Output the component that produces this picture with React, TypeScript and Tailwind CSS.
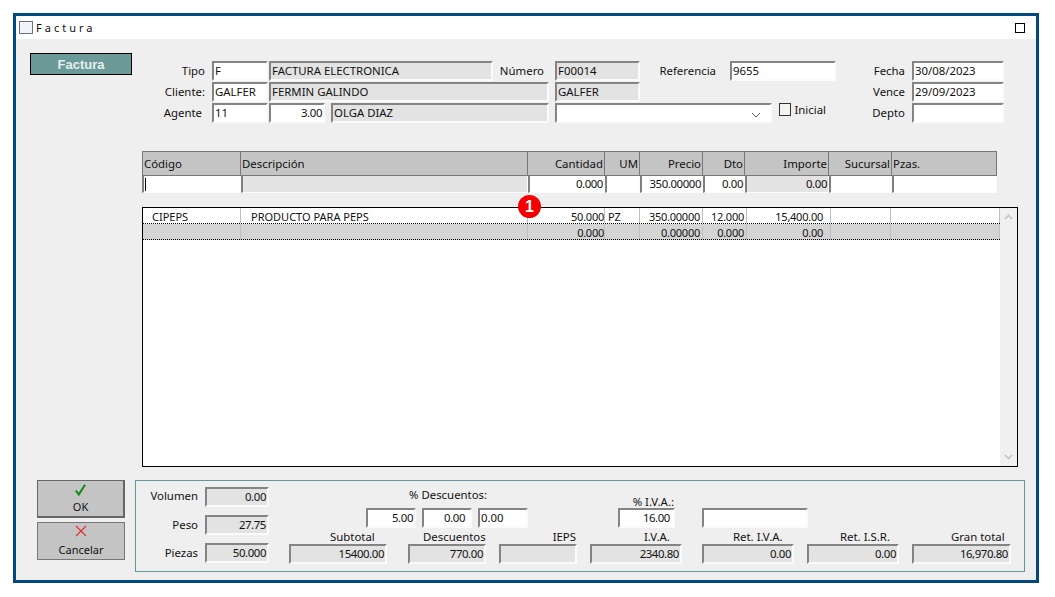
import React from "react";

const sunken = "box-border flex items-center h-[20px] border-2 border-t-[#848484] border-l-[#848484] border-r-[#fbfbfb] border-b-[#fbfbfb] overflow-hidden whitespace-nowrap px-[1px] shrink-0";

function F({ w, ml = "", white = false, right = false, children, cls = "" }: { w: string; ml?: string; white?: boolean; right?: boolean; children?: React.ReactNode; cls?: string }) {
  return (
    <div className={`${sunken} ${w} ${ml} ${white ? "bg-white" : "bg-[#e3e3e3]"} ${right ? "justify-end tracking-[-0.4px]" : "justify-start"} ${cls}`}>
      {children}
    </div>
  );
}

function L({ w, children, cls = "" }: { w: string; children: React.ReactNode; cls?: string }) {
  return <div className={`${w} shrink-0 text-right whitespace-nowrap ${cls}`}>{children}</div>;
}

const headW = ["w-[99px]", "w-[287px]", "w-[77px]", "w-[35px]", "w-[63px]", "w-[42px]", "w-[84px]", "w-[63px]", "w-[105px]"];
const headT: [string, boolean][] = [["Código", false], ["Descripción", false], ["Cantidad", true], ["UM", true], ["Precio", true], ["Dto", true], ["Importe", true], ["Sucursal", true], ["Pzas.", false]];
const inRow: [string, boolean][] = [["", true], ["", false], ["0.000", true], ["", true], ["350.00000", true], ["0.00", true], ["0.00", false], ["", true], ["", true]];
const rowW = ["w-[98px]", "w-[287px]", "w-[77px]", "w-[35px]", "w-[63px]", "w-[44px]", "w-[84px]", "w-[60px]", "w-[109px]"];
const row1 = ["CIPEPS", "PRODUCTO PARA PEPS", "50.000", "PZ", "350.00000", "12.000", "15,400.00", "", ""];
const row2 = ["", "", "0.000", "", "0.00000", "0.000", "0.00", "", ""];
const rowCellCls = ["pl-[9px]", "pl-[10px]", "justify-end tracking-[-0.25px]", "pl-[3px]", "justify-end pr-[2px] tracking-[-0.25px]", "justify-end pr-[2px] tracking-[-0.25px]", "justify-end pr-[7px] tracking-[-0.25px]", "", ""];

function Row({ data, cls }: { data: string[]; cls: string }) {
  return (
    <div className={`flex h-[16px] w-[857px] border-b border-dotted border-black ${cls}`}>
      {data.map((t, i) => (
        <div key={i} className={`${rowW[i]} box-border flex items-center overflow-hidden whitespace-nowrap border-r border-[#c0c0c0] text-[11px] pt-[1px] ${rowCellCls[i]}`}>
          {t}
        </div>
      ))}
    </div>
  );
}

function Summary({ w, ml, label, value, labelCls }: { w: string; ml: string; label: string; value: string; labelCls: string }) {
  return (
    <div className={`${w} ${ml} shrink-0 flex flex-col`}>
      <div className={`h-[14px] leading-[14px] whitespace-nowrap ${labelCls}`}>{label}</div>
      <F w={w} right>{value}</F>
    </div>
  );
}

export default function App() {
  return (
    <div className="w-[1055px] h-[597px] bg-white pl-[13px] pt-[13px] font-['Noto_Sans',sans-serif] text-[11.4px] leading-none text-[#111] overflow-hidden">
      <div className="box-border w-[1026px] h-[570px] border-[3px] border-[#004a80] flex flex-col bg-[#efefef]">
        {/* title bar */}
        <div className="h-[23px] bg-white flex items-center shrink-0 pl-[3px] pr-[11px]">
          <div className="w-[14px] h-[13px] border border-[#6d6d80] bg-[#f3f3fb]" />
          <div className="ml-[3px] tracking-[3px] text-[11px]">Factura</div>
          <div className="ml-auto w-[10px] h-[10px] border border-black" />
        </div>
        {/* body */}
        <div className="flex flex-1 min-h-0">
          {/* left column */}
          <div className="w-[119px] shrink-0 flex flex-col pt-[14px] pb-[20px]">
            <div className="ml-[14px] w-[102px] h-[22px] bg-[#6b9a98] border border-black flex items-center justify-center text-[#e6efee] font-bold text-[13px] font-['Liberation_Sans',sans-serif]">Factura</div>
            <div className="mt-auto ml-[21px] w-[88px] h-[38px] box-border bg-[#c4c4c4] border border-[#666] border-r-2 border-b-2 flex flex-col items-center pt-[1px]">
              <svg width="11" height="12" viewBox="0 0 11 12" className="mt-[2px]">
                <path d="M0.8 6.5 L3.8 10.5 L10 0.8" fill="none" stroke="#0f8a0f" strokeWidth="2" />
              </svg>
              <div className="mt-[5px] text-[11px]">OK</div>
            </div>
            <div className="mt-[4px] ml-[21px] w-[88px] h-[38px] box-border bg-[#c4c4c4] border border-[#777] flex flex-col items-center pt-[1px]">
              <svg width="12" height="12" viewBox="0 0 12 12" className="mt-[1px]">
                <path d="M1 1 L11 11 M11 1 L1 11" fill="none" stroke="#e03030" strokeWidth="1.2" />
              </svg>
              <div className="mt-[7px] text-[11px]">Cancelar</div>
            </div>
          </div>
          {/* right column */}
          <div className="flex-1 flex flex-col min-w-0 pt-[22px]">
            {/* form */}
            <div className="flex flex-col gap-[1px] h-[62px]">
              <div className="flex items-center h-[20px]">
                <L w="w-[70px]">Tipo</L>
                <F w="w-[56px]" ml="ml-[7px]" white>F</F>
                <F w="w-[224px]" ml="ml-[1px]">FACTURA ELECTRONICA</F>
                <L w="w-[51px]">Número</L>
                <F w="w-[85px]" ml="ml-[11px]">F00014</F>
                <L w="w-[76px]">Referencia</L>
                <F w="w-[106px]" ml="ml-[14px]" white>9655</F>
                <L w="w-[69px]">Fecha</L>
                <F w="w-[92px]" ml="ml-[7px]" white>30/08/2023</F>
              </div>
              <div className="flex items-center h-[20px]">
                <L w="w-[70px]">Cliente:</L>
                <F w="w-[56px]" ml="ml-[7px]" white>GALFER</F>
                <F w="w-[280px]" ml="ml-[1px]">FERMIN GALINDO</F>
                <F w="w-[85px]" ml="ml-[6px]">GALFER</F>
                <L w="w-[265px]">Vence</L>
                <F w="w-[92px]" ml="ml-[7px]" white>29/09/2023</F>
              </div>
              <div className="flex items-center h-[20px]">
                <L w="w-[70px]" cls="pr-[3px]">Agente</L>
                <F w="w-[56px]" ml="ml-[7px]" white>11</F>
                <F w="w-[56px]" ml="ml-[1px]" white right>3.00</F>
                <F w="w-[218px]" ml="ml-[6px]">OLGA DIAZ</F>
                <F w="w-[217px]" ml="ml-[6px]" white right>
                  <svg width="10" height="6" viewBox="0 0 10 6" className="mr-[8px] mt-[3px]">
                    <path d="M1 1 L5 5 L9 1" fill="none" stroke="#555" strokeWidth="1" />
                  </svg>
                </F>
                <div className="ml-[7px] w-[47px] h-[15px] -mt-[7px] flex items-center shrink-0">
                  <div className="w-[13px] h-[13px] border border-[#333] bg-[#f3f3f3]" />
                  <div className="ml-[3px]">Inicial</div>
                </div>
                <L w="w-[79px]">Depto</L>
                <F w="w-[92px]" ml="ml-[7px]" white />
              </div>
            </div>
            {/* grid head */}
            <div className="ml-[7px] mt-[28px] w-[855px] flex h-[25px] shrink-0">
              {headT.map(([t, r], i) => (
                <div key={i} className={`${headW[i]} box-border h-[25px] bg-[#c4c4c4] border border-[#777] border-l-0 first:border-l flex items-center px-[1px] ${r ? "justify-end" : "justify-start"}`}>
                  {t}
                </div>
              ))}
            </div>
            <div className="ml-[7px] w-[855px] flex h-[16px] shrink-0">
              {inRow.map(([t, w], i) => (
                <div key={i} className={`${headW[i]} box-border h-[17px] border-2 border-t-0 border-r-[1px] border-b-[1px] border-l-[#808080] border-r-[#fbfbfb] border-b-[#fbfbfb] flex items-center justify-end px-[1px] tracking-[-0.4px] ${w ? "bg-white" : "bg-[#e3e3e3]"}`}>
                  {i === 0 ? <div className="mr-auto w-[1px] h-[13px] bg-black" /> : t}
                </div>
              ))}
            </div>
            {/* table */}
            <div className="relative ml-[7px] mt-[15px] box-border w-[876px] h-[260px] border border-black bg-white flex shrink-0">
              <div className="flex flex-col w-[857px]">
                <Row data={row1} cls="bg-white" />
                <Row data={row2} cls="bg-[#d4d4d4]" />
              </div>
              <div className="w-[17px] ml-auto bg-[#f0f0f0] flex flex-col items-center justify-between py-[6px]">
                <svg width="9" height="6" viewBox="0 0 9 6"><path d="M1 5 L4.5 1.5 L8 5" fill="none" stroke="#c4c4c4" strokeWidth="1.6" /></svg>
                <svg width="9" height="6" viewBox="0 0 9 6"><path d="M1 1 L4.5 4.5 L8 1" fill="none" stroke="#c4c4c4" strokeWidth="1.6" /></svg>
              </div>
              <div className="absolute left-[375px] top-[-13px] w-[23px] h-[23px] rounded-full bg-[#f40000] flex items-center justify-center text-white font-bold text-[16px] font-['Liberation_Sans',sans-serif]">1</div>
            </div>
            {/* totals */}
            <div className="mt-[13px] box-border w-[890px] h-[92px] border border-[#5f9a9a] flex pt-[6px]">
              <div className="flex flex-col gap-[8px] w-[134px] shrink-0">
                <div className="flex items-center"><L w="w-[62px]" cls="mb-[3px]">Volumen</L><F w="w-[64px]" ml="ml-[7px]" right>0.00</F></div>
                <div className="flex items-center"><L w="w-[62px]" cls="mb-[1px]">Peso</L><F w="w-[64px]" ml="ml-[7px]" right>27.75</F></div>
                <div className="flex items-center"><L w="w-[62px]" cls="mb-[1px]">Piezas</L><F w="w-[64px]" ml="ml-[7px]" right>50.000</F></div>
              </div>
              <div className="flex flex-col flex-1">
                <div className="flex h-[42px]">
                  <div className="ml-[96px] w-[162px] shrink-0 flex flex-col">
                    <div className="h-[21px] pl-[43px] whitespace-nowrap pt-[2px]">% Descuentos:</div>
                    <div className="flex gap-[6px]">
                      <F w="w-[50px]" white right>5.00</F>
                      <F w="w-[50px]" white right cls="pr-[5px]">0.00</F>
                      <F w="w-[50px]" white>0.00</F>
                    </div>
                  </div>
                  <div className="ml-[90px] w-[57px] shrink-0 flex flex-col">
                    <div className="h-[21px] text-right whitespace-nowrap pt-[9px] pr-[1px]">% I.V.A.:</div>
                    <F w="w-[57px]" white right cls="pr-[3px]">16.00</F>
                  </div>
                  <div className="ml-[27px] w-[106px] shrink-0 flex flex-col pt-[21px]">
                    <F w="w-[106px]" white />
                  </div>
                </div>
                <div className="flex mt-[1px]">
                  <Summary w="w-[98px]" ml="ml-[19px]" label="Subtotal" value="15400.00" labelCls="pl-[41px]" />
                  <Summary w="w-[78px]" ml="ml-[21px]" label="Descuentos" value="770.00" labelCls="pl-[15px]" />
                  <Summary w="w-[78px]" ml="ml-[13px]" label="IEPS" value="" labelCls="text-right pr-[1px]" />
                  <Summary w="w-[92px]" ml="ml-[13px]" label="I.V.A." value="2340.80" labelCls="pl-[54px]" />
                  <Summary w="w-[92px]" ml="ml-[20px]" label="Ret. I.V.A." value="0.00" labelCls="pl-[31px]" />
                  <Summary w="w-[92px]" ml="ml-[13px]" label="Ret. I.S.R." value="0.00" labelCls="pl-[33px]" />
                  <Summary w="w-[99px]" ml="ml-[13px]" label="Gran total" value="16,970.80" labelCls="pl-[39px]" />
                </div>
              </div>
            </div>
          </div>
        </div>
      </div>
    </div>
  );
}
